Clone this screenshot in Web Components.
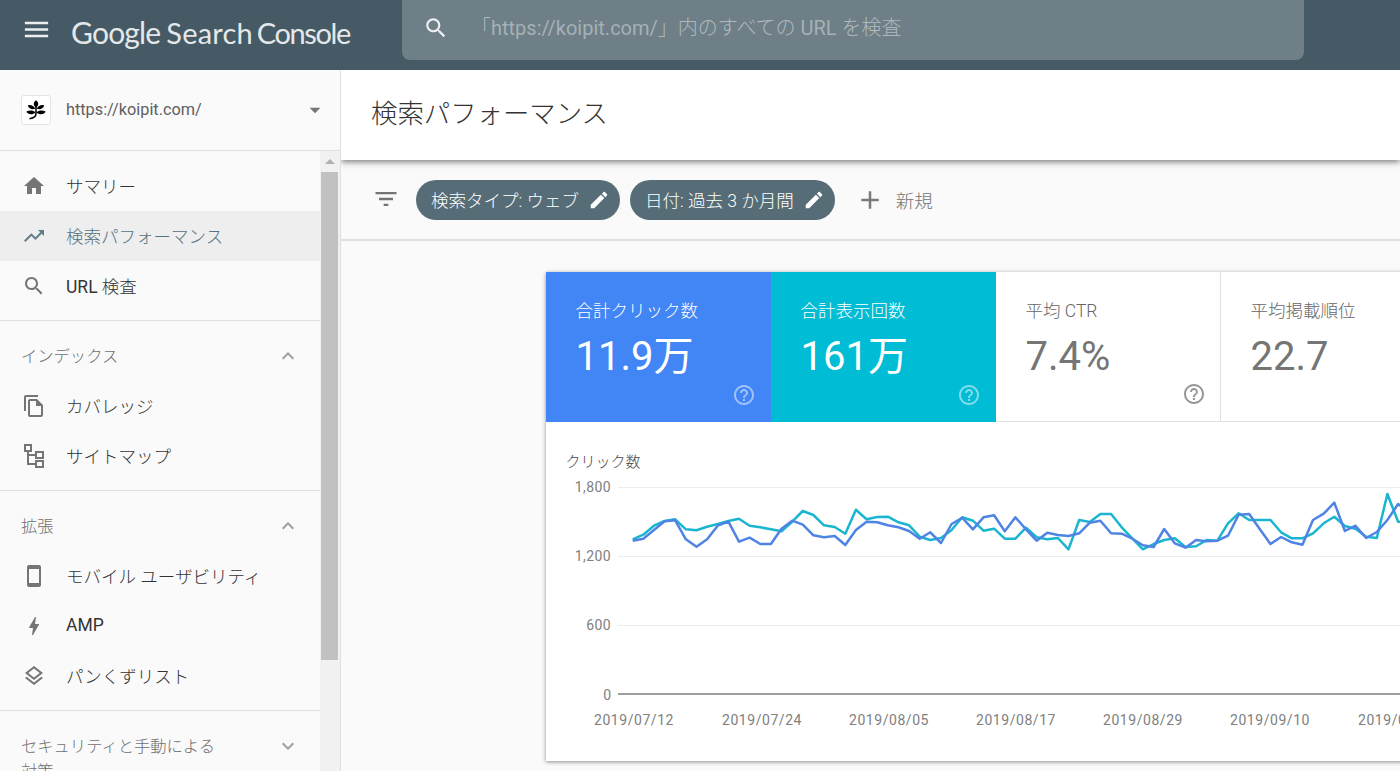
<!DOCTYPE html>
<html lang="ja">
<head>
<meta charset="utf-8">
<title>検索パフォーマンス</title>
<style>
  html, body { margin: 0; height: 100%; overflow: hidden; background: #fafafa; }
  body { font-family: Roboto, "Noto Sans CJK JP", sans-serif; }
  .latin { font-weight: 400; }
</style>
</head>
<body>
<gsc-app>
  <gsc-topbar slot="top"></gsc-topbar>
  <gsc-sidebar slot="side">
    <gsc-site slot="site" url="https://koipit.com/"></gsc-site>
    <gsc-nav-group>
      <gsc-nav-item icon="home">サマリー</gsc-nav-item>
      <gsc-nav-item icon="trending" active>検索パフォーマンス</gsc-nav-item>
      <gsc-nav-item icon="search"><span class="latin">URL</span> 検査</gsc-nav-item>
    </gsc-nav-group>
    <gsc-nav-group label="インデックス" chevron="less">
      <gsc-nav-item icon="copy">カバレッジ</gsc-nav-item>
      <gsc-nav-item icon="sitemap">サイトマップ</gsc-nav-item>
    </gsc-nav-group>
    <gsc-nav-group label="拡張" chevron="less">
      <gsc-nav-item icon="phone">モバイル ユーザビリティ</gsc-nav-item>
      <gsc-nav-item icon="bolt"><span class="latin">AMP</span></gsc-nav-item>
      <gsc-nav-item icon="layers">パンくずリスト</gsc-nav-item>
    </gsc-nav-group>
    <gsc-nav-group label="セキュリティと手動による対策" chevron="more"></gsc-nav-group>
  </gsc-sidebar>
  <gsc-main slot="main" heading="検索パフォーマンス">
    <gsc-filters slot="filters">
      <gsc-chip>検索タイプ: ウェブ</gsc-chip>
      <gsc-chip>日付: 過去 3 か月間</gsc-chip>
    </gsc-filters>
    <gsc-card>
      <gsc-metric slot="tabs" label="合計クリック数" value="11.9万" tone="blue"></gsc-metric>
      <gsc-metric slot="tabs" label="合計表示回数" value="161万" tone="teal"></gsc-metric>
      <gsc-metric slot="tabs" label="平均 CTR" value="7.4%"></gsc-metric>
      <gsc-metric slot="tabs" label="平均掲載順位" value="22.7"></gsc-metric>
      <gsc-chart></gsc-chart>
    </gsc-card>
  </gsc-main>
</gsc-app>

<script>
// material style icon paths, 24x24
const ICONS = {
  menu: 'M3 18h18v-2H3v2zm0-5h18v-2H3v2zm0-7v2h18V6H3z',
  search: 'M15.5 14h-.79l-.28-.27C15.41 12.59 16 11.11 16 9.5 16 5.91 13.09 3 9.5 3S3 5.91 3 9.5 5.91 16 9.5 16c1.61 0 3.09-.59 4.23-1.57l.27.28v.79l5 4.99L20.49 19l-4.99-5zm-6 0C7.01 14 5 11.99 5 9.5S7.01 5 9.5 5 14 7.01 14 9.5 11.99 14 9.5 14z',
  home: 'M10 20v-6h4v6h5v-8h3L12 3 2 12h3v8z',
  trending: 'M16 6l2.29 2.29-4.88 4.88-4-4L2 16.59 3.41 18l6-6 4 4 6.3-6.29L22 12V6z',
  copy: 'M16 1H4c-1.1 0-2 .9-2 2v14h2V3h12V1zm-1 4H8c-1.1 0-1.99.9-1.99 2L6 21c0 1.1.89 2 1.99 2H19c1.1 0 2-.9 2-2V11l-6-6zM8 21V7h6v5h5v9H8z',
  phone: 'M17 1.01L7 1c-1.1 0-2 .9-2 2v18c0 1.1.9 2 2 2h10c1.1 0 2-.9 2-2V3c0-1.1-.9-1.99-2-1.99zM17 19H7V5h10v14z',
  bolt: 'M11 21h-1l1-7H7.5c-.58 0-.57-.32-.38-.66.19-.34.05-.08.07-.12C8.48 10.94 10.42 7.54 13 3h1l-1 7h3.5c.49 0 .56.33.47.51l-.07.15C12.96 17.55 11 21 11 21z',
  layers: 'M11.99 18.54l-7.37-5.73L3 14.07l9 7 9-7-1.63-1.27zM12 16l7.36-5.73L21 9l-9-7-9 7 1.63 1.27L12 16zm0-11.47L17.74 9 12 13.47 6.26 9 12 4.53z',
  less: 'M12 8l-6 6 1.41 1.41L12 10.83l4.59 4.58L18 14z',
  more: 'M16.59 8.59L12 13.17 7.41 8.59 6 10l6 6 6-6z',
  drop: 'M7 10l5 5 5-5z',
  filter: 'M10 18h4v-2h-4v2zM3 6v2h18V6H3zm3 7h12v-2H6v2z',
  edit: 'M3 17.25V21h3.75L17.81 9.94l-3.75-3.75L3 17.25zM20.71 7.04c.39-.39.39-1.02 0-1.41l-2.34-2.34c-.39-.39-1.02-.39-1.41 0l-1.83 1.83 3.75 3.75 1.83-1.83z',
  add: 'M19 13h-6v6h-2v-6H5v-2h6V5h2v6h6v2z',
  help: 'M11 18h2v-2h-2v2zm1-16C6.48 2 2 6.48 2 12s4.48 10 10 10 10-4.48 10-10S17.52 2 12 2zm0 18c-4.41 0-8-3.59-8-8s3.59-8 8-8 8 3.59 8 8-3.59 8-8 8zm0-14c-2.21 0-4 1.79-4 4h2c0-1.1.9-2 2-2s2 .9 2 2c0 2-3 1.75-3 5h2c0-2.25 3-2.5 3-5 0-2.21-1.79-4-4-4z'
};

const FONT = 'Roboto, "Noto Sans CJK JP", sans-serif';

function shadowOf(el, html) {
  const shadow = el.attachShadow({ mode: 'open' });
  shadow.innerHTML = html;
  return shadow;
}

class GscIcon extends HTMLElement {
  connectedCallback() {
    const size = this.getAttribute('size') || 24;
    const name = this.getAttribute('name');
    // the sitemap one is drawn with strokes, the rest are filled paths
    const inner = name === 'sitemap'
      ? `<g fill="none" stroke="currentColor" stroke-width="2"><rect x="3" y="1" width="6" height="6"/><rect x="14" y="8" width="7" height="6"/><rect x="14" y="17" width="7" height="6"/><path d="M6 7v13h8M6 11h8"/></g>`
      : `<path fill="currentColor" d="${ICONS[name]}"/>`;
    shadowOf(this, `
      <style>
        :host { display: inline-flex; flex: none; width: ${size}px; height: ${size}px; }
        svg { display: block; width: 100%; height: 100%; }
      </style>
      <svg viewBox="0 0 24 24">${inner}</svg>`);
  }
}

class GscApp extends HTMLElement {
  constructor() {
    super();
    shadowOf(this, `
      <style>
        :host { display: grid; grid-template-columns: 341px minmax(0, 1fr); grid-template-rows: 70px minmax(0, 1fr); height: 771px; overflow: hidden; }
        .top { grid-column: 1 / 3; display: flex; }
        ::slotted([slot=top]) { flex: 1; }
      </style>
      <div class="top"><slot name="top"></slot></div>
      <slot name="side"></slot>
      <slot name="main"></slot>`);
  }
}

class GscTopbar extends HTMLElement {
  constructor() {
    super();
    shadowOf(this, `
      <style>
        :host { display: flex; align-items: flex-start; height: 70px; background: #455a64; color: #e6ebed; overflow: hidden; }
        .menu { margin-left: 21px; margin-top: 14px; color: #eceff1; }
        .logo { margin-left: 19px; margin-top: 12px; width: 331px; font-family: Lato, sans-serif; font-size: 30px; line-height: 40px; letter-spacing: -.8px; white-space: nowrap; color: #e4e8ea; }
        .logo .s { margin-left: -1px; font-size: 29px; letter-spacing: .2px; }
        .logo .c { margin-left: -3px; font-size: 29px; letter-spacing: -1.4px; }
        .search { display: flex; align-items: center; width: 902px; height: 60px; padding: 0 0 4px 21px; box-sizing: border-box; border-radius: 0 0 8px 8px; background: #6e7f87; }
        .search gsc-icon { color: #eceff1; }
        .ph { margin: -3px 0 0 22px; font-size: 20px; font-weight: 300; color: #aeb9be; white-space: nowrap; }
        .ph span { font-weight: 400; color: #a5b1b6; }
      </style>
      <gsc-icon class="menu" name="menu" size="31"></gsc-icon>
      <div class="logo">Google <span class="s">Search</span> <span class="c">Console</span></div>
      <div class="search">
        <gsc-icon name="search" size="26"></gsc-icon>
        <div class="ph">「<span>https://koipit.com/</span>」内のすべての <span>URL</span> を検査</div>
      </div>`);
  }
}

class GscSidebar extends HTMLElement {
  constructor() {
    super();
    shadowOf(this, `
      <style>
        :host { display: flex; flex-direction: column; height: 701px; overflow: hidden; background: #fafafa; border-right: 1px solid #e0e0e0; box-sizing: border-box; color: #424242; }
        .scroller { display: flex; flex: 1; min-height: 0; border-top: 1px solid #e0e0e0; }
        .list { flex: 1; min-width: 0; overflow: hidden; }
        .track { flex: none; width: 20px; background: #f1f1f1; box-sizing: border-box; padding: 0 2px 0 1px; }
        .arrow { width: 0; height: 0; margin: 8px auto 8px; border: 5px solid transparent; border-top: 0; border-bottom: 5px solid #b0b0b0; }
        .thumb { height: 488px; background: #c1c1c1; }
      </style>
      <slot name="site"></slot>
      <div class="scroller">
        <div class="list"><slot></slot></div>
        <div class="track"><div class="arrow"></div><div class="thumb"></div></div>
      </div>`);
  }
}

class GscSite extends HTMLElement {
  connectedCallback() {
    const url = this.getAttribute('url');
    shadowOf(this, `
      <style>
        :host { display: flex; align-items: center; flex: none; height: 80px; padding: 0 12px 0 21px; box-sizing: border-box; }
        .fav { width: 30px; height: 30px; flex: none; box-sizing: border-box; background: #fff; border: 1px solid #e4e4e4; border-radius: 3px; display: flex; align-items: center; justify-content: center; }
        .url { flex: 1; margin: -2px 0 0 15px; font-size: 16.3px; color: #5f5f5f; }
        gsc-icon { color: #757575; }
      </style>
      <div class="fav">
        <svg width="24" height="24" viewBox="0 0 22 22">
          <path fill="#000" d="M11 2c2 1.200 2.600 3.400 1.600 5.200-.3.500-.9 1.300-1.600 1.800-.7-.5-1.300-1.300-1.600-1.800C8.400 5.400 9 3.200 11 2zM3.500 6.800c2.500-.9 5.300.1 6.800 3-2.700 1-5.700.4-6.800-3zM18.500 6.800c-1.100 3.400-4.100 4-6.800 3 1.500-2.900 4.300-3.900 6.800-3zM2 12.600c2.800-1.900 6.200-1.500 8.600.4-2.400 2.600-6.200 2.600-8.600-.4zM20 12.600c-2.400 3-6.200 3-8.600.4 2.400-1.900 5.800-2.300 8.600-.4z"/>
          <path fill="none" stroke="#000" stroke-width="1.400" d="M11 8v6.500c0 2.200-2.500 4-6 4.500"/>
        </svg>
      </div>
      <div class="url">${url}</div>
      <gsc-icon name="drop" size="26"></gsc-icon>`);
  }
}

class GscNavGroup extends HTMLElement {
  connectedCallback() {
    const label = this.getAttribute('label');
    const chevron = this.getAttribute('chevron');
    const head = label ? `
      <div class="head">
        <div class="label">${label}</div>
        <gsc-icon name="${chevron}"></gsc-icon>
      </div>` : '';
    shadowOf(this, `
      <style>
        :host { display: block; padding: 10px 0 9px; border-bottom: 1px solid #e0e0e0; }
        .head { display: flex; align-items: flex-start; justify-content: space-between; padding: 13px 20px 12px 21px; color: #6f6f6f; }
        .label { width: 200px; font-size: 16.3px; font-weight: 300; line-height: 25px; }
        gsc-icon { color: #9e9e9e; }
      </style>
      ${head}
      <slot></slot>`);
  }
}

class GscNavItem extends HTMLElement {
  connectedCallback() {
    const icon = this.getAttribute('icon');
    shadowOf(this, `
      <style>
        :host { display: flex; align-items: center; height: 50px; padding: 0 0 0 22px; font-size: 17.5px; font-weight: 300; color: #333; white-space: nowrap; }
        :host([active]) { background: #eeeeee; color: #557380; }
        .txt { margin-top: -2px; }
        gsc-icon { margin-right: 20px; color: #757575; }
        :host([active]) gsc-icon { color: #5f7c8a; }
      </style>
      <gsc-icon name="${icon}"></gsc-icon>
      <div class="txt"><slot></slot></div>`);
  }
}

class GscMain extends HTMLElement {
  connectedCallback() {
    const heading = this.getAttribute('heading');
    shadowOf(this, `
      <style>
        :host { display: flex; flex-direction: column; height: 701px; min-width: 0; overflow: hidden; background: #fafafa; }
        header { flex: none; display: flex; align-items: center; height: 90px; padding: 0 0 7px 30px; box-sizing: border-box; background: #fff; box-shadow: 0 2px 6px rgba(0,0,0,.5); position: relative; z-index: 2; font-size: 26.4px; font-weight: 300; color: #333; }
        .body { flex: 1; min-height: 0; padding: 31px 0 0 205px; overflow: hidden; }
      </style>
      <header>${heading}</header>
      <slot name="filters"></slot>
      <div class="body"><slot></slot></div>`);
  }
}

class GscFilters extends HTMLElement {
  constructor() {
    super();
    shadowOf(this, `
      <style>
        :host { display: flex; align-items: center; flex: none; height: 81px; padding: 0 0 0 31px; box-sizing: border-box; border-bottom: 2px solid #e0e0e0; background: #fafafa; }
        .filter { margin-right: 16px; margin-top: -1px; color: #757575; }
        .chips { display: flex; gap: 10px; }
        .add { margin-left: 20px; color: #7a7a7a; }
        .new { margin-left: 11px; font-size: 18.5px; font-weight: 300; color: #757575; }
      </style>
      <gsc-icon class="filter" name="filter" size="28"></gsc-icon>
      <div class="chips"><slot></slot></div>
      <gsc-icon class="add" name="add" size="30"></gsc-icon>
      <div class="new">新規</div>`);
  }
}

class GscChip extends HTMLElement {
  constructor() {
    super();
    shadowOf(this, `
      <style>
        :host { display: flex; align-items: center; height: 40px; padding: 0 10px 0 15px; border-radius: 20px; background: #566d78; color: #fff; font-size: 17.5px; font-weight: 300; white-space: nowrap; }
        gsc-icon { margin-left: 9px; color: #fff; }
      </style>
      <slot></slot>
      <gsc-icon name="edit" size="22"></gsc-icon>`);
  }
}

class GscCard extends HTMLElement {
  constructor() {
    super();
    shadowOf(this, `
      <style>
        :host { display: block; width: 900px; height: 489px; background: #fff; box-shadow: 0 1px 4px rgba(0,0,0,.45); }
        .tabs { display: flex; height: 150px; }
      </style>
      <div class="tabs"><slot name="tabs"></slot></div>
      <slot></slot>`);
  }
}

class GscMetric extends HTMLElement {
  connectedCallback() {
    const label = this.getAttribute('label');
    const value = this.getAttribute('value');
    shadowOf(this, `
      <style>
        :host { display: flex; flex-direction: column; flex: none; width: 225px; height: 150px; box-sizing: border-box; padding: 27px 15px 15px 29.5px; background: #fff; color: #757575; border-right: 1px solid #e0e0e0; border-bottom: 1px solid #e0e0e0; }
        :host([tone=blue]) { background: #4285f4; color: #fff; border: 0; }
        :host([tone=teal]) { background: #00bcd4; color: #fff; border: 0; }
        .label { font-size: 17.5px; font-weight: 300; line-height: 24px; }
        :host(:not([tone])) .label { color: #666; }
        .value { margin-top: 10px; font-size: 40px; line-height: 48px; }
        gsc-icon { align-self: flex-end; margin-top: auto; opacity: .5; color: inherit; }
        :host(:not([tone])) gsc-icon { opacity: .75; margin-right: -1px; }
      </style>
      <div class="label">${label}</div>
      <div class="value">${value}</div>
      <gsc-icon name="help" size="24"></gsc-icon>`);
  }
}

// values read off the reference, in page pixels
const TEAL = [539.3,534.7,525.7,521,519.3,529.3,530.3,526.7,524,521,518.7,525.7,527.3,529.3,531.3,521.7,511,515,525.3,527,533.7,509.7,519.3,517,516.7,522.3,525.3,536.7,540,538,530,517.3,
  520.7,530.7,528.7,538.7,538.7,527.7,537.3,539.3,538,549.3,520,522,514,514,527.3,538.3,549.3,544,540,538.3,547,546.3,540,540.7,523.3,513.3,520,520,520,532.3,538.3,538.3,533.3,523.3,516.7,526,528.7,536.7,538,494,521.7,522.3];
const BLUE = [540.7,538.7,530,521.3,520.3,539.3,546.7,539.3,525.7,521.7,541.7,537.7,544,544,528.7,520.7,524.7,535.3,537.3,536,545,530,521.7,522.3,525.3,527.3,531,538.7,532.3,543,524,517.7,
  529.3,517.3,515.3,531.3,517.3,529.3,540.7,532.7,535,536,533.3,522.7,520.7,533.3,533.7,538.7,545.3,547,529,543.3,547.7,540,541.3,540.7,535.7,514.7,514,529.3,544,537,542.3,544.7,520,513.7,502.7,531,525.7,538,532,520,504,512];

class GscChart extends HTMLElement {
  constructor() {
    super();
    const line = values => values.map((y, i) => `${(632.7 + 10.63 * i).toFixed(1)},${y}`).join(' ');
    const yAxis = [['1,800', 487.5], ['1,200', 556.5], ['600', 625.5]];
    const dates = [['2019/07/12', 634], ['2019/07/24', 762], ['2019/08/05', 889], ['2019/08/17', 1016], ['2019/08/29', 1143], ['2019/09/10', 1270], ['2019/09/22', 1398]];
    shadowOf(this, `
      <style>
        :host { display: block; position: relative; height: 339px; overflow: hidden; }
        svg { display: block; }
        text { font-family: ${FONT}; font-size: 14px; fill: #808080; }
        .title { font-size: 15px; font-weight: 300; fill: #444; }
      </style>
      <svg width="900" height="339" viewBox="546 422 900 339">
        <text class="title" x="565.500" y="467">クリック数</text>
        ${yAxis.map(([t, y]) => `<line x1="618" x2="1446" y1="${y}" y2="${y}" stroke="#ececec"/><text x="611" y="${y + 4.5}" text-anchor="end" letter-spacing=".4">${t}</text>`).join('')}
        <line x1="618" x2="1446" y1="694" y2="694" stroke="#9e9e9e" stroke-width="2"/>
        <text x="611" y="700" text-anchor="end">0</text>
        ${dates.map(([t, x]) => `<text x="${x}" y="725" text-anchor="middle" letter-spacing=".55">${t}</text>`).join('')}
        <polyline fill="none" stroke="#1ab6cf" stroke-width="2.5" stroke-linejoin="round" points="${line(TEAL)}"/>
        <polyline fill="none" stroke="#4f84e4" stroke-width="2.5" stroke-linejoin="round" points="${line(BLUE)}"/>
      </svg>`);
  }
}

customElements.define('gsc-icon', GscIcon);
customElements.define('gsc-app', GscApp);
customElements.define('gsc-topbar', GscTopbar);
customElements.define('gsc-sidebar', GscSidebar);
customElements.define('gsc-site', GscSite);
customElements.define('gsc-nav-group', GscNavGroup);
customElements.define('gsc-nav-item', GscNavItem);
customElements.define('gsc-main', GscMain);
customElements.define('gsc-filters', GscFilters);
customElements.define('gsc-chip', GscChip);
customElements.define('gsc-card', GscCard);
customElements.define('gsc-metric', GscMetric);
customElements.define('gsc-chart', GscChart);
</script>
</body>
</html>
